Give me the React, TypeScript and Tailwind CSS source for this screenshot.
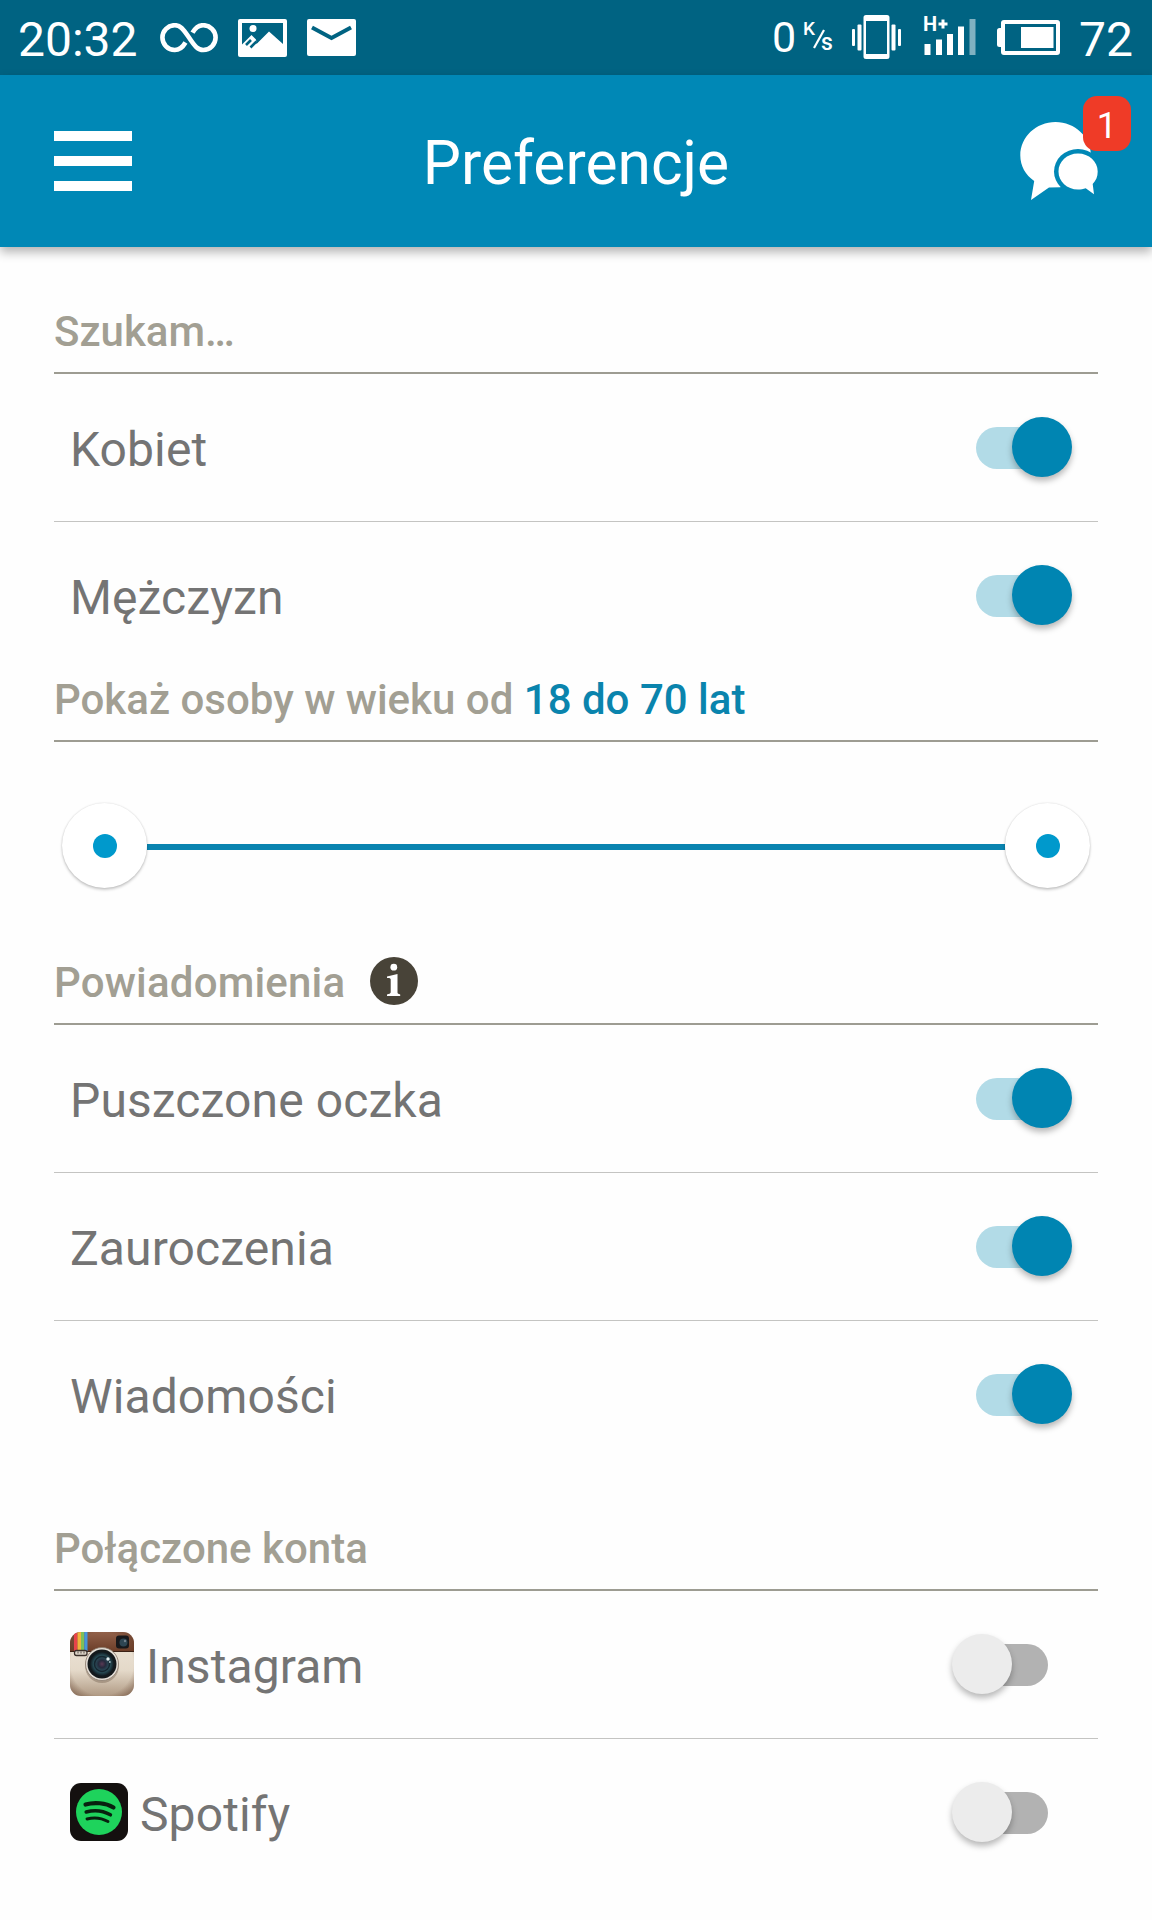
import clsx from 'clsx'
import { ReactNode, useState } from 'react'

type ToggleProps = {
  label: string
  checked: boolean
  onChange: () => void
}

const InfinityIcon = () => (
  <svg className="h-[30px] w-[58px]" viewBox="0 0 58 30" fill="none" stroke="#fff" strokeWidth="4.600">
    <path d="M25.500 19.500C22.500 24.600 19 27 14.800 27A12.400 12.400 0 0 1 14.800 2.200c5.200 0 8.200 3.200 14.200 12.400S38 27 43.200 27a12.400 12.400 0 0 0 0-24.800c-4.200 0-7.700 2.400-10.700 7.500" />
  </svg>
)

const PictureIcon = () => (
  <svg className="h-[38px] w-[49px]" viewBox="0 0 49 38">
    <rect width="49" height="38" rx="2" fill="#fff" />
    <path d="M4 4h41v21L31 12.500 18.500 25 18 20.500 13.500 16 4 25.500z" fill="#006382" />
    <circle cx="15" cy="9.500" r="3.500" fill="#fff" />
    <path
      d="M8 26l5-5M18.500 22.500l-6 6"
      fill="none"
      stroke="#006382"
      strokeWidth="2.600"
    />
  </svg>
)

const MailIcon = () => (
  <svg className="h-[37px] w-[49px]" viewBox="0 0 49 37">
    <rect width="49" height="37" rx="2" fill="#fff" />
    <path d="M5 8.500l19.500 10.500L44 8.500" fill="none" stroke="#006382" strokeWidth="4" />
  </svg>
)

const SpeedUnit = () => (
  <div className="relative h-[40px] w-[30px]">
    <span className="absolute top-0 left-[-1px] text-[19px] leading-[24px] font-medium">K</span>
    <svg className="absolute top-[12px] left-[8px] h-[20px] w-[14px]" viewBox="0 0 14 20">
      <path d="M2 19L12 1" stroke="#fff" strokeWidth="2.200" />
    </svg>
    <span className="absolute top-[13px] left-[17px] text-[23px] leading-[26px] font-medium">s</span>
  </div>
)

const VibrateIcon = () => (
  <svg className="h-[44px] w-[49px]" viewBox="0 0 49 44" fill="#fff">
    <rect y="14" width="3" height="17" rx="1" />
    <rect x="5.500" y="9.500" width="4" height="26" rx="1" />
    <path
      fillRule="evenodd"
      d="M14 0h21a2.500 2.500 0 0 1 2.500 2.500v39A2.500 2.500 0 0 1 35 44H14a2.500 2.500 0 0 1-2.500-2.500v-39A2.500 2.500 0 0 1 14 0zm0 6v33h21V6z"
    />
    <rect x="39.500" y="9.500" width="4" height="26" rx="1" />
    <rect x="46" y="14" width="3" height="17" rx="1" />
  </svg>
)

const Signal = () => (
  <div className="relative h-[40px] w-[52px]">
    <span className="absolute -top-[3px] left-[-1px] text-[20px] leading-[24px] font-bold">H</span>
    <svg className="h-[40px] w-[52px]" viewBox="0 0 52 40" fill="#fff">
      <path d="M14.500 9h9M19 4.500v9" stroke="#fff" strokeWidth="3" />
      <rect x="0.500" y="29" width="6" height="11" />
      <rect x="12" y="24.500" width="6" height="15.500" />
      <rect x="23" y="19" width="6" height="21" />
      <rect x="34" y="11.500" width="6" height="28.500" />
      <rect x="45.500" y="4" width="6" height="36" fill="#80b1c1" />
    </svg>
  </div>
)

const BatteryIcon = () => (
  <svg className="h-[35px] w-[63px]" viewBox="0 0 63 35" fill="#fff">
    <path d="M5 8H2.500A2.500 2.500 0 0 0 0 10.500v14A2.500 2.500 0 0 0 2.500 27H5z" />
    <rect x="6" y="2" width="55" height="31" rx="1" fill="none" stroke="#fff" strokeWidth="4" />
    <rect x="24" y="7" width="32.500" height="21" />
  </svg>
)

const ChatIcon = () => (
  <svg className="h-[78px] w-[78px]" viewBox="0 0 78 78" fill="#fff">
    <path d="M35.500 0C55 0 71 15 71 34c0 17-13 31-30 31.300L29 65.500 11 78l3.200-19C5.500 53 .3 44 .3 33.500.3 15 16 0 35.500 0z" />
    <ellipse cx="58" cy="49.500" rx="24" ry="22.500" fill="#0088b6" />
    <path d="M40 65.500h13l12 10H40z" fill="#0088b6" />
    <path d="M58 31.500c11 0 19.700 8 19.700 18 0 5.200-1.700 9-5 12.500l1.300 10.300-8.300-6.100c-2.300.8-5 1.300-7.700 1.300-11 0-19.500-8-19.500-18s8.500-18 19.500-18z" />
  </svg>
)

const InfoIcon = () => (
  <svg className="-mt-[5px] h-[48px] w-[48px]" viewBox="0 0 48 48">
    <circle cx="24" cy="24" r="24" fill="#484338" />
    <circle cx="23.800" cy="10.200" r="3.400" fill="#fff" />
    <path
      d="M17 19.500l10.500-2.500v18.500c0 1.200 1 1.500 2.700 1.900V39H17v-1.600c2-.4 3.700-.7 3.700-2.100V22.500c0-1.200-.6-1.700-3.700-1.600z"
      fill="#fff"
    />
  </svg>
)

const InstagramIcon = () => (
  <svg className="-mt-[2px] h-[64px] w-[64px]" viewBox="0 0 64 64">
    <defs>
      <clipPath id="igClip">
        <rect width="64" height="64" rx="11" />
      </clipPath>
      <linearGradient id="igBody" x1="0" y1="0" x2="0" y2="1">
        <stop offset="0" stopColor="#eee6da" />
        <stop offset=".6" stopColor="#e4d9c9" />
        <stop offset="1" stopColor="#b09a84" />
      </linearGradient>
      <radialGradient id="igEdge" cx=".5" cy=".5" r=".72">
        <stop offset=".68" stopColor="#4e2a18" stopOpacity="0" />
        <stop offset="1" stopColor="#4e2a18" stopOpacity=".6" />
      </radialGradient>
      <linearGradient id="igTop" x1="0" y1="0" x2="0" y2="1">
        <stop offset="0" stopColor="#92614a" />
        <stop offset="1" stopColor="#6b3d28" />
      </linearGradient>
      <radialGradient id="igLens">
        <stop offset="0" stopColor="#5a3a55" />
        <stop offset=".3" stopColor="#252a3c" />
        <stop offset=".65" stopColor="#2c5560" />
        <stop offset="1" stopColor="#10181e" />
      </radialGradient>
    </defs>
    <g clipPath="url(#igClip)">
      <rect width="64" height="64" fill="url(#igBody)" />
      <rect width="64" height="19.500" fill="url(#igTop)" />
      <rect y="19" width="64" height="1" fill="#3b2216" />
      <rect width="64" height="64" fill="url(#igEdge)" />
      <rect x="4" width="3.500" height="19" fill="#e8434a" />
      <rect x="7.500" width="3.500" height="19" fill="#f0b43c" />
      <rect x="11" width="3.300" height="19" fill="#7dc05a" />
      <rect x="14.300" width="3.200" height="19" fill="#4596dc" />
      <rect x="4.500" y="18.500" width="12.500" height="5" rx="2" fill="#ddd5c9" stroke="#3a302b" strokeWidth="1.300" />
      <path d="M8 19.500v2M11 19.500v2M14 19.500v2" stroke="#3a302b" strokeWidth=".8" />
    </g>
    <rect x="46" y="3.500" width="13" height="13" rx="3" fill="#17181b" />
    <circle cx="53.500" cy="10.500" r="4" fill="#2e4653" />
    <circle cx="55" cy="9" r="1.200" fill="#71808b" />
    <circle cx="32" cy="34" r="17" fill="#4e3a2c" opacity=".3" />
    <circle cx="32" cy="32" r="16.500" fill="#e4ded6" stroke="#8b7c6e" strokeWidth=".8" />
    <circle cx="32" cy="32" r="14.500" fill="#14191c" />
    <circle cx="32" cy="32" r="12" fill="url(#igLens)" />
    <circle cx="32" cy="32" r="7.500" fill="none" stroke="#162630" strokeWidth="1.500" />
    <circle cx="38" cy="27" r="1.700" fill="#e4eef1" />
    <circle cx="39.800" cy="30" r="1" fill="#9db6bd" />
  </svg>
)

const SpotifyIcon = () => (
  <svg className="-mt-[2px] h-[58px] w-[58px]" viewBox="0 0 58 58">
    <rect width="58" height="58" rx="11" fill="#14100f" />
    <circle cx="29" cy="29" r="23" fill="#1ed35c" />
    <g fill="none" stroke="#08210f" strokeLinecap="round">
      <path d="M15.500 21.500c9-2.600 20-1.700 28 3" strokeWidth="4.200" />
      <path d="M16.200 29c8-2.200 17-1.300 24.200 2.800" strokeWidth="3.500" />
      <path d="M17 36c7-1.800 14.700-1 21 2.600" strokeWidth="2.900" />
    </g>
  </svg>
)

const Toggle = ({ label, checked, onChange }: ToggleProps) => (
  <button
    type="button"
    role="switch"
    aria-checked={checked}
    aria-label={label}
    onClick={onChange}
    className="relative mr-[26px] flex h-[60px] w-[120px] shrink-0 items-center justify-center"
  >
    <span
      className={clsx('h-[42px] w-[72px] rounded-full', checked ? 'bg-[#b2dbe7]' : 'bg-[#b2b2b2]')}
    />
    <span
      className={clsx(
        'absolute -top-[0.500px] size-[60px] rounded-full shadow-[0_4px_6px_rgba(0,0,0,0.28)]',
        checked ? 'right-[0.500px] bg-[#0085b2]' : 'left-0 bg-[#ececec]'
      )}
    />
  </button>
)

const SectionTitle = ({ children }: { children: ReactNode }) => (
  <h2 className="flex h-[68px] items-center border-b-2 border-[#9d9c92] pb-[14px] text-[42px] leading-[52px] font-medium text-[#a29f93]">
    {children}
  </h2>
)

const Row = ({
  label,
  icon,
  checked,
  onChange,
  last
}: ToggleProps & { icon?: ReactNode; last?: boolean }) => (
  <div
    className={clsx(
      'flex h-[148px] items-center border-b pl-[16px]',
      last ? 'border-transparent' : 'border-[#c4c4c2]'
    )}
  >
    {icon}
    <span
      className={clsx(
        'grow pt-[4px] text-[48px] leading-[56px] tracking-[0.1px] text-[#747474]',
        icon && 'ml-[12px]'
      )}
    >
      {label}
    </span>
    <Toggle label={label} checked={checked} onChange={onChange} />
  </div>
)

const SliderThumb = () => (
  <span className="z-10 flex size-[85px] items-center justify-center rounded-full bg-white shadow-[0_2px_3px_rgba(0,0,0,0.2),0_0_2px_rgba(0,0,0,0.15)]">
    <span className="size-[24px] rounded-full bg-[#0099cc]" />
  </span>
)

const StatusBar = () => (
  <div className="flex h-[75px] items-start justify-between bg-[#006382] pr-[19px] pl-[18px] text-[48px] leading-[56px] text-white">
    <div className="flex items-start">
      <span className="mt-[12px] w-[142px]">20:32</span>
      <div className="mt-[23px] mr-[20px]">
        <InfinityIcon />
      </div>
      <div className="mt-[19px] mr-[20px]">
        <PictureIcon />
      </div>
      <div className="mt-[19px]">
        <MailIcon />
      </div>
    </div>
    <div className="flex items-start">
      <span className="mt-[9px] mr-[8px] text-[43px]">0</span>
      <div className="mt-[17px] mr-[18px]">
        <SpeedUnit />
      </div>
      <div className="mt-[15px] mr-[23px]">
        <VibrateIcon />
      </div>
      <div className="mt-[15px] mr-[21px]">
        <Signal />
      </div>
      <div className="mt-[20px] mr-[19px]">
        <BatteryIcon />
      </div>
      <span className="mt-[12px]">72</span>
    </div>
  </div>
)

const Header = () => (
  <header className="relative z-10 flex h-[172px] items-start justify-between bg-[#0088b6] px-[54px] text-white shadow-[0_5px_10px_rgba(0,0,0,0.3)]">
    <button type="button" aria-label="Menu" className="mt-[56px] flex w-[78px] flex-col gap-[15px]">
      <span className="h-[10px] bg-white" />
      <span className="h-[10px] bg-white" />
      <span className="h-[10px] bg-white" />
    </button>
    <h1 className="mt-[54px] text-[60.5px] leading-[70px]">Preferencje</h1>
    <div className="relative mt-[47px]">
      <ChatIcon />
      <span className="absolute -top-[26px] -right-[33px] flex h-[55px] w-[48px] items-center justify-center rounded-[14px] bg-[#ef3b27] pt-[5px] text-[36px]">
        1
      </span>
    </div>
  </header>
)

const App = () => {
  const [settings, setSettings] = useState({
    women: true,
    men: true,
    winks: true,
    crushes: true,
    messages: true,
    instagram: false,
    spotify: false
  })

  const bind = (key: keyof typeof settings) => ({
    checked: settings[key],
    onChange: () => setSettings((prev) => ({ ...prev, [key]: !prev[key] }))
  })

  return (
    <div className="h-[1920px] w-[1152px] overflow-hidden bg-[#fefefe] font-[Roboto,sans-serif]">
      <StatusBar />
      <Header />
      <main className="px-[54px] pt-[59px]">
        <section>
          <SectionTitle>Szukam…</SectionTitle>
          <Row label="Kobiet" {...bind('women')} />
          <Row label="Mężczyzn" last {...bind('men')} />
        </section>

        <section className="mt-[4px]">
          <SectionTitle>
            <span className="whitespace-pre">Pokaż osoby w wieku od </span>
            <span className="text-[#0a84ad]">18 do 70 lat</span>
          </SectionTitle>
          <div className="flex h-[215px] items-start px-[8px] pt-[61px]">
            <SliderThumb />
            <div className="mt-[41px] h-[6px] grow bg-[#0a84b0]" />
            <SliderThumb />
          </div>
        </section>

        <section>
          <SectionTitle>
            <span className="mr-[25px] tracking-[0.18px]">Powiadomienia</span>
            <InfoIcon />
          </SectionTitle>
          <Row label="Puszczone oczka" {...bind('winks')} />
          <Row label="Zauroczenia" {...bind('crushes')} />
          <Row label="Wiadomości" last {...bind('messages')} />
        </section>

        <section className="mt-[54px]">
          <SectionTitle>Połączone konta</SectionTitle>
          <Row label="Instagram" icon={<InstagramIcon />} {...bind('instagram')} />
          <Row label="Spotify" icon={<SpotifyIcon />} last {...bind('spotify')} />
        </section>
      </main>
    </div>
  )
}

export default App
